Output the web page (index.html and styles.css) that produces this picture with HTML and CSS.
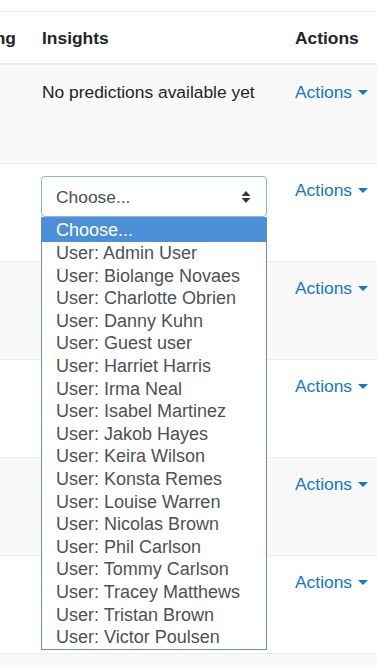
FILE: index.html
```html
<!DOCTYPE html>
<html lang="en">
<head>
    <meta charset="UTF-8">
    <meta name="viewport" content="width=device-width, initial-scale=1.0">
    <title>Prediction models</title>
    <link rel="stylesheet" href="styles.css">
</head>
<body>

<div class="table-wrap">
<table class="models">
    <colgroup>
        <col class="col-train">
        <col class="col-insights">
        <col class="col-actions">
    </colgroup>
    <tr class="head">
        <th><div class="clip">Last training</div></th>
        <th>Insights</th>
        <th>Actions</th>
    </tr>
    <tr>
        <td></td>
        <td>No predictions available yet</td>
        <td><a class="actions" href="#">Actions</a></td>
    </tr>
    <tr>
        <td></td>
        <td>
            <div class="select-box">
                <div class="select">
                    <span>Choose...</span>
                    <svg class="updown" width="10" height="12" viewBox="0 0 10 12">
                        <path d="M5 0 L9.5 5 L0.5 5 Z M0.5 7 L9.5 7 L5 12 Z" fill="#343a40"/>
                    </svg>
                </div>
                <ul class="options">
                    <li class="selected">Choose...</li>
                    <li>User: Admin User</li>
                    <li>User: Biolange Novaes</li>
                    <li>User: Charlotte Obrien</li>
                    <li>User: Danny Kuhn</li>
                    <li>User: Guest user</li>
                    <li>User: Harriet Harris</li>
                    <li>User: Irma Neal</li>
                    <li>User: Isabel Martinez</li>
                    <li>User: Jakob Hayes</li>
                    <li>User: Keira Wilson</li>
                    <li>User: Konsta Remes</li>
                    <li>User: Louise Warren</li>
                    <li>User: Nicolas Brown</li>
                    <li>User: Phil Carlson</li>
                    <li>User: Tommy Carlson</li>
                    <li>User: Tracey Matthews</li>
                    <li>User: Tristan Brown</li>
                    <li>User: Victor Poulsen</li>
                </ul>
            </div>
        </td>
        <td><a class="actions" href="#">Actions</a></td>
    </tr>
    <tr>
        <td></td>
        <td></td>
        <td><a class="actions" href="#">Actions</a></td>
    </tr>
    <tr>
        <td></td>
        <td></td>
        <td><a class="actions" href="#">Actions</a></td>
    </tr>
    <tr>
        <td></td>
        <td></td>
        <td><a class="actions" href="#">Actions</a></td>
    </tr>
    <tr>
        <td></td>
        <td></td>
        <td><a class="actions" href="#">Actions</a></td>
    </tr>
    <tr class="last">
        <td></td>
        <td></td>
        <td></td>
    </tr>
</table>
</div>

</body>
</html>
```

FILE: styles.css
```css
body {
    font-family: 'Liberation Sans', Arial, sans-serif;
    font-size: 17.4px;
    line-height: 26px;
    color: #212529;
    background-color: #fff;
    margin: 0;
    padding: 11px 0 0 0;
    overflow: hidden;
}

.table-wrap {
    width: 377px;
}

.models {
    width: 377px;
    table-layout: fixed;
    border-collapse: separate;
    border-spacing: 0;
}

.col-train {
    width: 26px;
}
.col-insights {
    width: 253px;
}

.models th,
.models td {
    padding: 13px 16px 0 16px;
    text-align: left;
    vertical-align: top;
    white-space: nowrap;
}

.models th {
    height: 54px;
    box-sizing: border-box;
    padding: 13px 16px 12px 16px;
    font-weight: bold;
    border-top: 1px solid #ebebeb;
    border-bottom: 2px solid #ebebeb;
}

.models td {
    height: 98px;
    box-sizing: border-box;
    border-top: 1px solid #ececec;
}

.models tr:nth-child(2) td {
    padding-top: 14px;
    border-top: none;
}

.models tr:nth-child(even) td {
    background-color: #f9f9f9;
}

.models tr.last td {
    height: 15px;
    padding: 0;
}

.clip {
    display: flex;
    justify-content: flex-end;
}

.actions {
    color: #1177d1;
    text-decoration: none;
}
.actions::after {
    content: "";
    display: inline-block;
    margin-left: 6px;
    vertical-align: 3px;
    border-top: 5px solid #1177d1;
    border-left: 5px solid transparent;
    border-right: 5px solid transparent;
}

.select-box {
    position: relative;
    width: 226px;
    margin-top: -1px;
    margin-left: -1px;
}

.select {
    box-sizing: border-box;
    height: 41px;
    border: 1px solid #80b3f0;
    border-radius: 4px;
    padding: 0 15px 0 14px;
    display: flex;
    align-items: center;
    justify-content: space-between;
    color: #495057;
    background-color: #fff;
}

.options {
    position: absolute;
    top: 41px;
    left: 0;
    width: 226px;
    box-sizing: border-box;
    margin: 0;
    padding: 0;
    list-style: none;
    background-color: #fff;
    border: 1px solid #6c8fbe;
    font-size: 18px;
    line-height: 22.6px;
    color: #4d5156;
}

.options li {
    padding-left: 14px;
}

.options .selected {
    background-color: #4a8fd8;
    color: #fff;
    line-height: 24px;
}
```
